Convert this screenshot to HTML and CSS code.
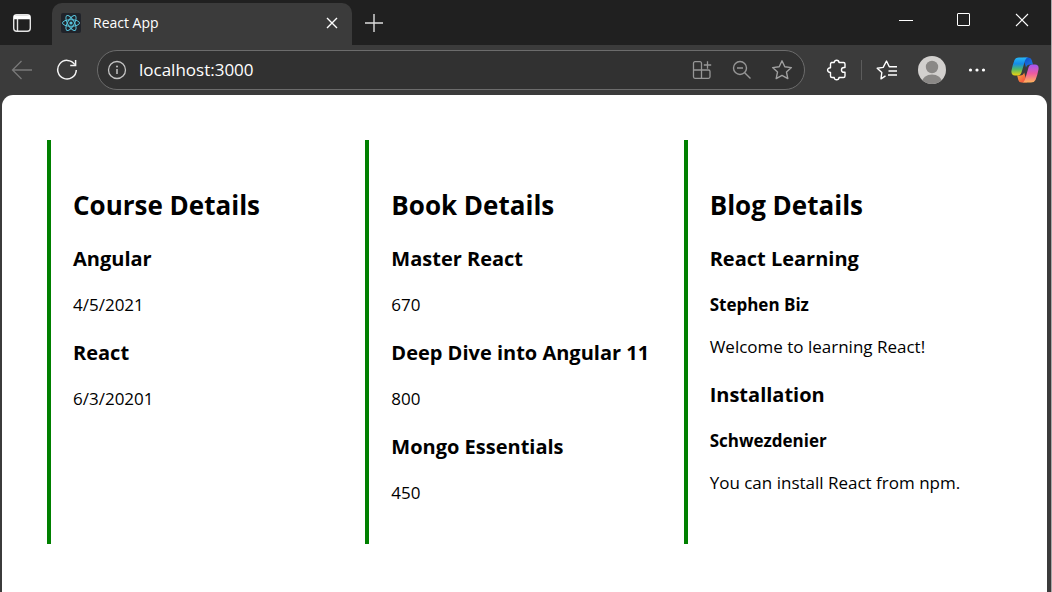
FILE: index.html
```html
<!DOCTYPE html>
<html lang="en">
<head>
<meta charset="utf-8">
<title>React App</title>
<link rel="stylesheet" href="styles.css">
</head>
<body>
<div class="browser">
  <header class="titlebar">
    <button class="tab-actions" aria-label="Tab actions">
      <svg width="20" height="20" viewBox="0 0 20 20" fill="none" stroke="#e4e4e4" stroke-width="1.4"><rect x="1.7" y="1.7" width="16.6" height="16.6" rx="3"/><path d="M2 3.5h16M2 5h16" stroke="#fff" stroke-width="2.4"/><path d="M5.5 6v12"/></svg>
    </button>
    <div class="tab">
      <svg class="favicon" width="20" height="20" viewBox="0 0 20 20" fill="none" stroke="#58c4dc" stroke-width="1"><rect width="20" height="20" rx="2" fill="#20232a" stroke="none"/><ellipse cx="10" cy="10" rx="8.5" ry="3.3"/><ellipse cx="10" cy="10" rx="8.5" ry="3.3" transform="rotate(60 10 10)"/><ellipse cx="10" cy="10" rx="8.5" ry="3.3" transform="rotate(120 10 10)"/><circle cx="10" cy="10" r="1.6" fill="#58c4dc" stroke="none"/></svg>
      <span class="tab-title">React App</span>
      <button class="tab-close" aria-label="Close tab">
        <svg width="12" height="12" viewBox="0 0 12 12" stroke="#fff" stroke-width="1.4"><path d="M1 1l10 10M11 1L1 11"/></svg>
      </button>
    </div>
    <button class="new-tab" aria-label="New tab">
      <svg width="18" height="18" viewBox="0 0 18 18" stroke="#ddd" stroke-width="1.4"><path d="M9 0v18M0 9h18"/></svg>
    </button>
    <div class="window-controls">
      <button aria-label="Minimize"><svg width="14" height="14" viewBox="0 0 14 14" stroke="#fff"><path d="M0 7.5h14"/></svg></button>
      <button aria-label="Maximize"><svg width="14" height="14" viewBox="0 0 14 14" fill="none" stroke="#fff"><rect x=".5" y=".5" width="12" height="12" rx=".5"/></svg></button>
      <button aria-label="Close"><svg width="14" height="14" viewBox="0 0 14 14" stroke="#fff" stroke-width="1.1"><path d="M1 1l12 12M13 1L1 13"/></svg></button>
    </div>
  </header>
  <nav class="toolbar">
    <button class="tool" aria-label="Back"><svg width="22" height="20" viewBox="0 0 22 20" fill="none" stroke="#797979" stroke-width="1.3"><path d="M21 10H1.5M10.500 1L1.500 10l9 9"/></svg></button>
    <button class="tool" aria-label="Refresh"><svg width="22" height="22" viewBox="0 0 22 22" fill="none" stroke="#f4f4f4" stroke-width="1.500"><path d="M18.800 5.600A9.300 9.300 0 1 0 20.300 11"/><path d="M19.600 1v5.400h-5.400"/></svg></button>
    <form class="address">
      <button type="button" class="site-info" aria-label="Site information"><svg width="20" height="20" viewBox="0 0 20 20" fill="none" stroke="#c4c4c4" stroke-width="1.300"><circle cx="10" cy="10" r="8.500"/><path d="M10 9v5" stroke-width="1.500"/><circle cx="10" cy="6.500" r="1" fill="#c4c4c4" stroke="none"/></svg></button>
      <input type="text" value="localhost:3000" aria-label="Address">
      <button type="button" class="tool" aria-label="Apps"><svg width="20" height="20" viewBox="0 0 20 20" fill="none" stroke="#969696" stroke-width="1.300"><path d="M9.500 18V3.200a1.500 1.500 0 0 0-1.500-1.500H3a1.500 1.500 0 0 0-1.500 1.500v13.600a1.500 1.500 0 0 0 1.500 1.500h13.500a1.500 1.500 0 0 0 1.500-1.500v-5.300a1.500 1.500 0 0 0-1.500-1.500H1.500M15.500 1.300v7.400M11.800 5h7.400"/></svg></button>
      <button type="button" class="tool" aria-label="Zoom out"><svg width="20" height="20" viewBox="0 0 20 20" fill="none" stroke="#969696" stroke-width="1.400"><circle cx="8" cy="8" r="6.500"/><path d="M5 8h6M12.700 12.700l5.800 5.800"/></svg></button>
      <button type="button" class="tool" aria-label="Add to favorites"><svg width="22" height="22" viewBox="0 0 22 22" fill="none" stroke="#a0a0a0" stroke-width="1.400" stroke-linejoin="round"><path d="M11 1.800l2.800 6 6.600.8-4.900 4.500 1.300 6.500L11 16.400l-5.800 3.200 1.300-6.500L1.600 8.600l6.600-.8z"/></svg></button>
    </form>
    <button class="tool" aria-label="Extensions"><svg width="22" height="22" viewBox="0 0 22 22" fill="none" stroke="#fff" stroke-width="1.400" stroke-linejoin="round"><path d="M5 3.500h3.200c0-3 4.800-3 4.800 0h4.500q1.500 0 1.500 1.500v3.500h-1c-3.400 0-3.400 4.800 0 4.800h1V17q0 1.500-1.500 1.500H13c0 3-4.800 3-4.800 0H6q-1.500 0-1.500-1.500v-3.500c-3.900 0-3.900-4.800 0-4.800V5q0-1.500 1.500-1.500"/></svg></button>
    <span class="divider"></span>
    <button class="tool" aria-label="Favorites"><svg width="22" height="22" viewBox="0 0 22 22" fill="none" stroke="#fff" stroke-width="1.400" stroke-linejoin="round"><path d="M9.500 16.800L5 19.800l.8-6.300L1.200 9.300l6-.9L10.500 2l2.800 5.800H21M12.500 12H21M12 16h9"/></svg></button>
    <button class="tool" aria-label="Profile"><svg width="28" height="28" viewBox="0 0 28 28"><defs><clipPath id="face"><circle cx="14" cy="14" r="14"/></clipPath></defs><g clip-path="url(#face)"><rect width="28" height="28" fill="#d2d0ce"/><circle cx="14" cy="11" r="6.200" fill="#8a8886"/><ellipse cx="14" cy="26" rx="10" ry="7.500" fill="#8a8886"/></g></svg></button>
    <button class="tool" aria-label="Settings and more"><svg width="18" height="4" viewBox="0 0 18 4" fill="#fff"><circle cx="2.500" cy="2" r="1.600"/><circle cx="9" cy="2" r="1.600"/><circle cx="15.500" cy="2" r="1.600"/></svg></button>
    <button class="tool copilot" aria-label="Copilot"><svg width="28" height="26" viewBox="0 0 28 26">
      <defs>
        <linearGradient id="cool" x1="0" y1="0" x2="0" y2="1"><stop offset="0" stop-color="#27b8f5"/><stop offset=".35" stop-color="#158be8"/><stop offset=".65" stop-color="#50b869"/><stop offset="1" stop-color="#f2d20c"/></linearGradient>
        <linearGradient id="warm" x1="0" y1="0" x2="0" y2="1"><stop offset="0" stop-color="#a255f5"/><stop offset=".5" stop-color="#ed5aa0"/><stop offset="1" stop-color="#ffb45a"/></linearGradient>
        <linearGradient id="blue" x1="0" y1="0" x2="1" y2="1"><stop offset="0" stop-color="#0c48c5"/><stop offset="1" stop-color="#2380e8"/></linearGradient>
        <linearGradient id="fire" x1="0" y1="0" x2="1" y2="1"><stop offset="0" stop-color="#ffae38"/><stop offset="1" stop-color="#ef3d42"/></linearGradient>
      </defs>
      <path d="M12 .5h5.500q2.500 0 3.200 2.500l1.300 4.500h-3q-3 0-4 3z" fill="url(#blue)"/>
      <path d="M16 25.500h-5.500q-2.500 0-3.200-2.500L6.200 18.500h3q3 0 4-3z" fill="url(#fire)"/>
      <path d="M8 .5h9q-2.200.5-3 3l-3.500 12q-.9 3-4 3H4Q-.2 18.500.5 13.500q1-5.500 3-10.500Q4.700.5 8 .5z" fill="url(#cool)"/>
      <path d="M20 25.500h-9q2.200-.5 3-3l3.500-12q.9-3 4-3H24q4.200 0 3.500 5-1 5.500-3 10.500-1.200 2.500-4.500 2.500z" fill="url(#warm)"/>
    </svg></button>
  </nav>
  <main class="page">
    <section class="column">
      <h2>Course Details</h2>
      <h3>Angular</h3>
      <p>4/5/2021</p>
      <h3>React</h3>
      <p>6/3/20201</p>
    </section>
    <section class="column">
      <h2>Book Details</h2>
      <h3>Master React</h3>
      <p>670</p>
      <h3>Deep Dive into Angular 11</h3>
      <p>800</p>
      <h3>Mongo Essentials</h3>
      <p>450</p>
    </section>
    <section class="column">
      <h2>Blog Details</h2>
      <h3>React Learning</h3>
      <h4>Stephen Biz</h4>
      <p>Welcome to learning React!</p>
      <h3>Installation</h3>
      <h4>Schwezdenier</h4>
      <p>You can install React from npm.</p>
    </section>
  </main>
</div>
</body>
</html>
```
FILE: styles.css
```css
* { box-sizing: border-box; }

body {
  margin: 0;
  background: #a8a8a8;
  font-family: "Segoe UI", "Open Sans", "Noto Sans", sans-serif;
  color: #000;
}

button {
  display: flex;
  align-items: center;
  justify-content: center;
  flex: none;
  padding: 0;
  border: 0;
  background: none;
}

.browser {
  display: flex;
  flex-direction: column;
  min-height: 100vh;
  margin-right: 1px;
  background: #3b3b3b;
}

.titlebar {
  display: flex;
  height: 45px;
  background: #202020;
}

.tab-actions { width: 44px; }

.tab {
  display: flex;
  align-items: center;
  flex: 0 1 300px;
  margin: 3px 0 0 8px;
  padding: 0 10px 2px 9px;
  border-radius: 10px 10px 0 0;
  background: #3b3b3b;
}

.tab-title {
  flex: 1;
  margin-left: 12px;
  color: #fff;
  font-size: 14px;
  line-height: 20px;
}

.tab-close { width: 20px; height: 20px; }

.new-tab { width: 44px; }

.window-controls {
  display: flex;
  margin-left: auto;
  padding-bottom: 5px;
}

.window-controls button { width: 58px; }

.toolbar {
  display: flex;
  align-items: center;
  gap: 5px;
  height: 50px;
  padding: 0 6px 0 2px;
}

.tool { width: 40px; height: 40px; }

.address {
  display: flex;
  align-items: center;
  flex: 1;
  min-width: 0;
  height: 40px;
  margin: 0 7px 0 5px;
  padding-right: 2px;
  border: 1px solid #6c6c6c;
  border-radius: 20px;
  background: #313131;
}

.site-info { width: 38px; height: 38px; }

.address input {
  flex: 1;
  min-width: 0;
  padding: 0 0 0 3px;
  border: 0;
  outline: 0;
  background: none;
  color: #fff;
  font-family: inherit;
  font-size: 17px;
  line-height: 24px;
}

.divider {
  width: 1px;
  height: 20px;
  margin-left: -1px;
  background: #5c5c5c;
}

.copilot { margin-left: 3px; }

.page {
  display: grid;
  grid-template-columns: repeat(3, minmax(0, 1fr));
  align-items: stretch;
  align-content: start;
  flex: 1;
  margin: 0 4px 0 2px;
  padding: 45px;
  border-radius: 11px 11px 0 0;
  background: #fff;
}

.column {
  padding: 47px 0 39px 22px;
  border-left: 4px solid #008000;
}

h2, h3, h4, p { margin: 0; }

h2 { font-size: 26px; line-height: 36px; }

h3 {
  margin-top: 22px;
  font-size: 20px;
  line-height: 28px;
}

h4 {
  margin-top: 20px;
  font-size: 17px;
  line-height: 24px;
}

p {
  margin-top: 20px;
  font-size: 17px;
  line-height: 24px;
}

h4 + p { margin-top: 18px; }
```
